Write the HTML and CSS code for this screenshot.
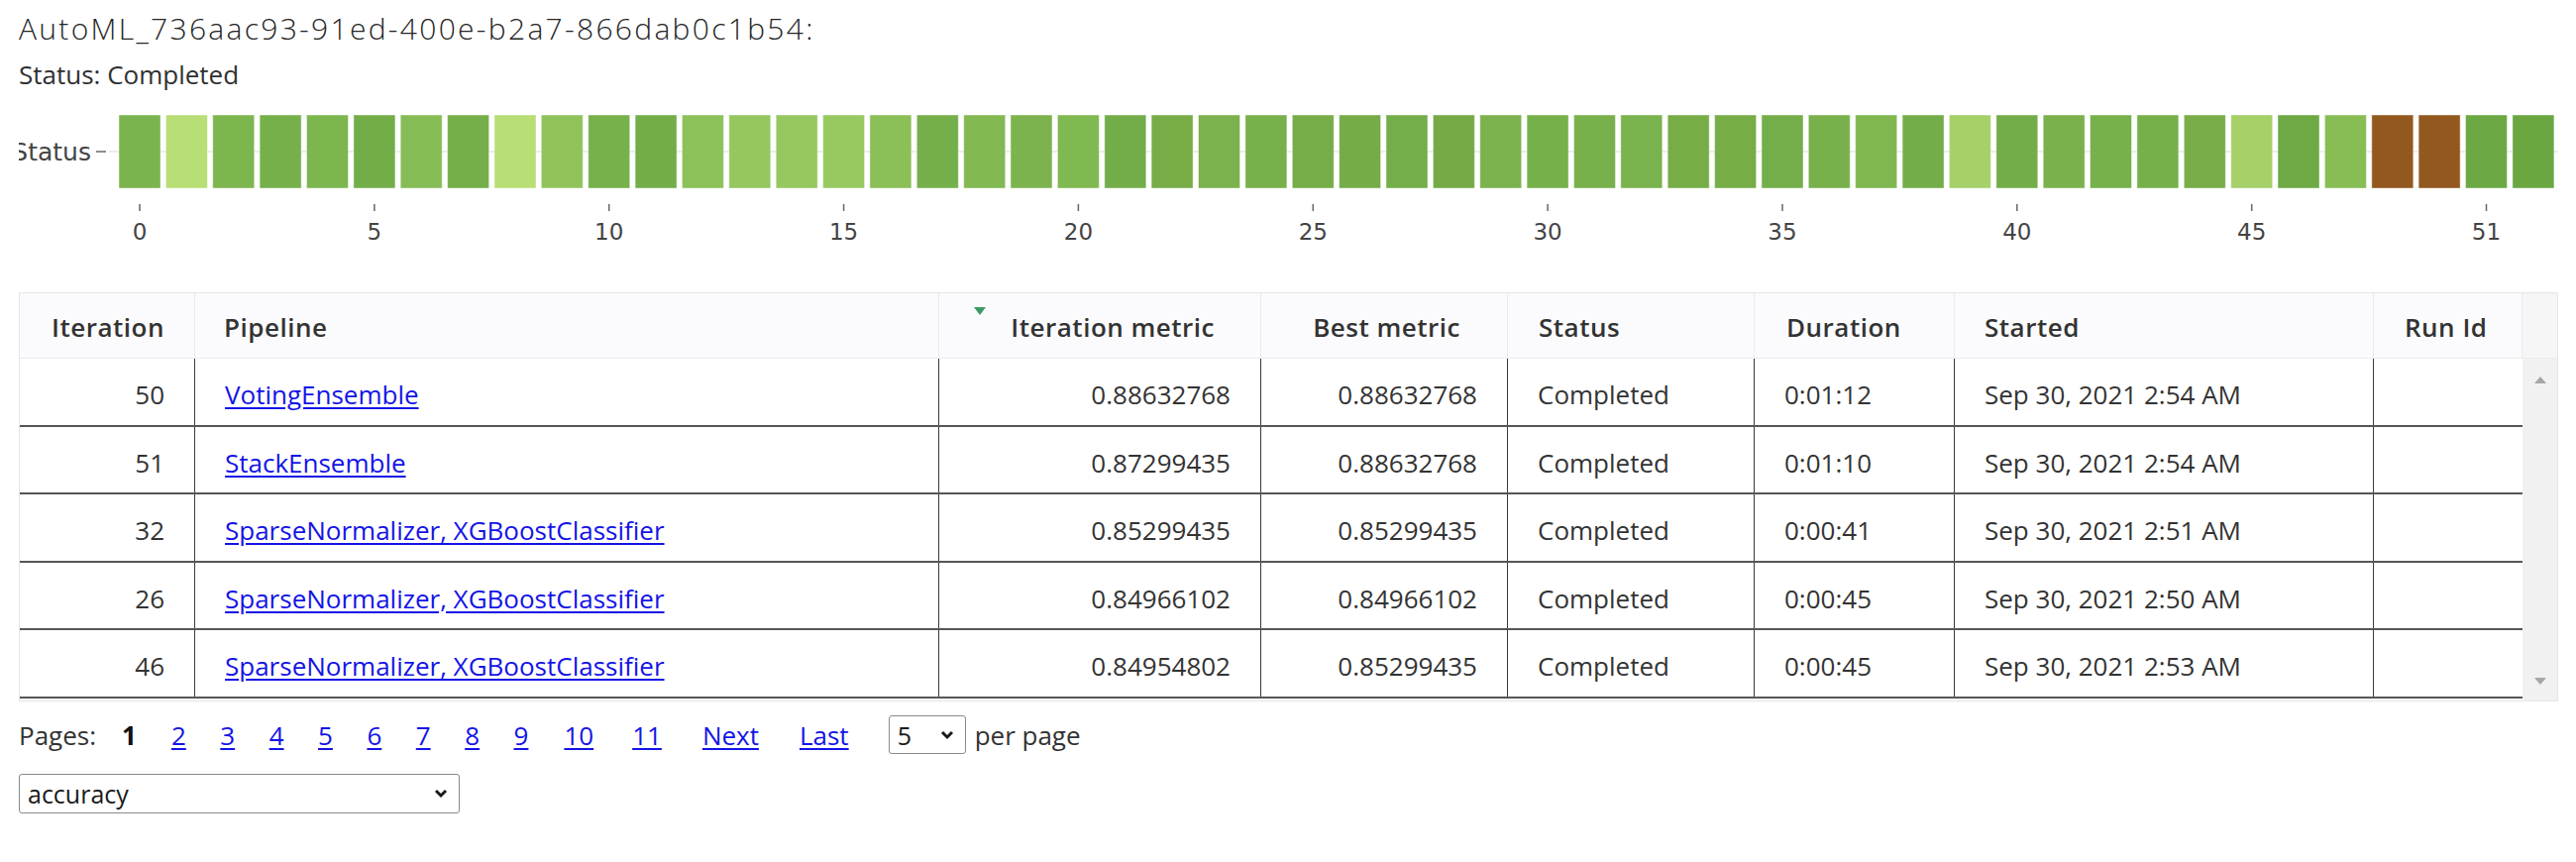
FILE: index.html
```html
<!DOCTYPE html>
<html>
<head>
<meta charset="utf-8">
<link rel="stylesheet" href="styles.css">
</head>
<body>
<div class="head">
  <div class="title">AutoML_736aac93-91ed-400e-b2a7-866dab0c1b54:</div>
  <div class="status">Status: Completed</div>
</div>

<svg class="chart" width="2600" height="203" viewBox="0 92 2600 203" xmlns="http://www.w3.org/2000/svg">
  <defs><clipPath id="plotclip"><rect x="19" y="92" width="2581" height="203"/></clipPath></defs>
  <g clip-path="url(#plotclip)">
    <line x1="110" y1="153" x2="2582" y2="153" stroke="#ececec" stroke-width="2"/>
    <g class="bars" stroke="rgba(255,255,255,0.45)" stroke-width="1">
      <rect x="120.0" y="116" width="42" height="74" fill="#7bb44e"/>
      <rect x="167.4" y="116" width="42" height="74" fill="#b8de76"/>
      <rect x="214.7" y="116" width="42" height="74" fill="#7db64f"/>
      <rect x="262.1" y="116" width="42" height="74" fill="#76b04a"/>
      <rect x="309.5" y="116" width="42" height="74" fill="#7cb64f"/>
      <rect x="356.9" y="116" width="42" height="74" fill="#72ad48"/>
      <rect x="404.2" y="116" width="42" height="74" fill="#86bc55"/>
      <rect x="451.6" y="116" width="42" height="74" fill="#74af49"/>
      <rect x="499.0" y="116" width="42" height="74" fill="#b8de76"/>
      <rect x="546.3" y="116" width="42" height="74" fill="#90c45b"/>
      <rect x="593.7" y="116" width="42" height="74" fill="#76b14b"/>
      <rect x="641.1" y="116" width="42" height="74" fill="#72ad48"/>
      <rect x="688.4" y="116" width="42" height="74" fill="#8dc159"/>
      <rect x="735.8" y="116" width="42" height="74" fill="#95c75e"/>
      <rect x="783.2" y="116" width="42" height="74" fill="#97c85f"/>
      <rect x="830.6" y="116" width="42" height="74" fill="#98c960"/>
      <rect x="877.9" y="116" width="42" height="74" fill="#8bbf57"/>
      <rect x="925.3" y="116" width="42" height="74" fill="#75af4a"/>
      <rect x="972.7" y="116" width="42" height="74" fill="#82b952"/>
      <rect x="1020.0" y="116" width="42" height="74" fill="#7cb34e"/>
      <rect x="1067.4" y="116" width="42" height="74" fill="#80b851"/>
      <rect x="1114.8" y="116" width="42" height="74" fill="#73ad49"/>
      <rect x="1162.1" y="116" width="42" height="74" fill="#77ac47"/>
      <rect x="1209.5" y="116" width="42" height="74" fill="#7cb24e"/>
      <rect x="1256.9" y="116" width="42" height="74" fill="#78b14c"/>
      <rect x="1304.3" y="116" width="42" height="74" fill="#76ad48"/>
      <rect x="1351.6" y="116" width="42" height="74" fill="#75ac48"/>
      <rect x="1399.0" y="116" width="42" height="74" fill="#74ae4a"/>
      <rect x="1446.4" y="116" width="42" height="74" fill="#75aa46"/>
      <rect x="1493.7" y="116" width="42" height="74" fill="#7cb24e"/>
      <rect x="1541.1" y="116" width="42" height="74" fill="#76b04b"/>
      <rect x="1588.5" y="116" width="42" height="74" fill="#78b14c"/>
      <rect x="1635.8" y="116" width="42" height="74" fill="#7ab34d"/>
      <rect x="1683.2" y="116" width="42" height="74" fill="#76ad47"/>
      <rect x="1730.6" y="116" width="42" height="74" fill="#76ad47"/>
      <rect x="1778.0" y="116" width="42" height="74" fill="#74ae4a"/>
      <rect x="1825.3" y="116" width="42" height="74" fill="#78b14c"/>
      <rect x="1872.7" y="116" width="42" height="74" fill="#80b750"/>
      <rect x="1920.1" y="116" width="42" height="74" fill="#73ad49"/>
      <rect x="1967.4" y="116" width="42" height="74" fill="#a6d068"/>
      <rect x="2014.8" y="116" width="42" height="74" fill="#73ad49"/>
      <rect x="2062.2" y="116" width="42" height="74" fill="#7bb14c"/>
      <rect x="2109.5" y="116" width="42" height="74" fill="#77b14c"/>
      <rect x="2156.9" y="116" width="42" height="74" fill="#76b04b"/>
      <rect x="2204.3" y="116" width="42" height="74" fill="#78ad49"/>
      <rect x="2251.7" y="116" width="42" height="74" fill="#a6d068"/>
      <rect x="2299.0" y="116" width="42" height="74" fill="#6ea946"/>
      <rect x="2346.4" y="116" width="42" height="74" fill="#88bd55"/>
      <rect x="2393.8" y="116" width="42" height="74" fill="#93581f"/>
      <rect x="2441.1" y="116" width="42" height="74" fill="#93581f"/>
      <rect x="2488.5" y="116" width="42" height="74" fill="#6ca944"/>
      <rect x="2535.9" y="116" width="42" height="74" fill="#6aa741"/>
    </g>
    <text class="ylabel" x="92" y="162" text-anchor="end">Status</text>
    <line x1="97" y1="153" x2="107" y2="153" stroke="#666" stroke-width="1.5"/>
    <g class="xticks" stroke="#666" stroke-width="1.5">
      <line x1="141" y1="206" x2="141" y2="213"/>
      <line x1="377.9" y1="206" x2="377.9" y2="213"/>
      <line x1="614.7" y1="206" x2="614.7" y2="213"/>
      <line x1="851.6" y1="206" x2="851.6" y2="213"/>
      <line x1="1088.4" y1="206" x2="1088.4" y2="213"/>
      <line x1="1325.3" y1="206" x2="1325.3" y2="213"/>
      <line x1="1562.1" y1="206" x2="1562.1" y2="213"/>
      <line x1="1799" y1="206" x2="1799" y2="213"/>
      <line x1="2035.8" y1="206" x2="2035.8" y2="213"/>
      <line x1="2272.7" y1="206" x2="2272.7" y2="213"/>
      <line x1="2509.5" y1="206" x2="2509.5" y2="213"/>
    </g>
    <g class="xlabels" text-anchor="middle">
      <text x="141" y="242">0</text>
      <text x="377.9" y="242">5</text>
      <text x="614.7" y="242">10</text>
      <text x="851.6" y="242">15</text>
      <text x="1088.4" y="242">20</text>
      <text x="1325.3" y="242">25</text>
      <text x="1562.1" y="242">30</text>
      <text x="1799" y="242">35</text>
      <text x="2035.8" y="242">40</text>
      <text x="2272.7" y="242">45</text>
      <text x="2509.5" y="242">51</text>
    </g>
  </g>
</svg>

<div class="grid-wrap">
  <div class="thead">
    <div class="th r pr-iter">Iteration</div>
    <div class="th pl-29">Pipeline</div>
    <div class="th r pr-47 sorted"><span class="sort-arrow"></span>Iteration metric</div>
    <div class="th r pr-48">Best metric</div>
    <div class="th pl-31">Status</div>
    <div class="th pl-32">Duration</div>
    <div class="th pl-30">Started</div>
    <div class="th pl-31">Run Id</div>
    <div class="th corner"></div>
  </div>
  <div class="tbody">
    <div class="rows">
      <div class="row">
        <div class="cell num">50</div>
        <div class="cell"><a href="#">VotingEnsemble</a></div>
        <div class="cell num">0.88632768</div>
        <div class="cell num">0.88632768</div>
        <div class="cell">Completed</div>
        <div class="cell">0:01:12</div>
        <div class="cell">Sep 30, 2021 2:54 AM</div>
        <div class="cell"></div>
      </div>
      <div class="row">
        <div class="cell num">51</div>
        <div class="cell"><a href="#">StackEnsemble</a></div>
        <div class="cell num">0.87299435</div>
        <div class="cell num">0.88632768</div>
        <div class="cell">Completed</div>
        <div class="cell">0:01:10</div>
        <div class="cell">Sep 30, 2021 2:54 AM</div>
        <div class="cell"></div>
      </div>
      <div class="row">
        <div class="cell num">32</div>
        <div class="cell"><a href="#">SparseNormalizer, XGBoostClassifier</a></div>
        <div class="cell num">0.85299435</div>
        <div class="cell num">0.85299435</div>
        <div class="cell">Completed</div>
        <div class="cell">0:00:41</div>
        <div class="cell">Sep 30, 2021 2:51 AM</div>
        <div class="cell"></div>
      </div>
      <div class="row">
        <div class="cell num">26</div>
        <div class="cell"><a href="#">SparseNormalizer, XGBoostClassifier</a></div>
        <div class="cell num">0.84966102</div>
        <div class="cell num">0.84966102</div>
        <div class="cell">Completed</div>
        <div class="cell">0:00:45</div>
        <div class="cell">Sep 30, 2021 2:50 AM</div>
        <div class="cell"></div>
      </div>
      <div class="row">
        <div class="cell num">46</div>
        <div class="cell"><a href="#">SparseNormalizer, XGBoostClassifier</a></div>
        <div class="cell num">0.84954802</div>
        <div class="cell num">0.85299435</div>
        <div class="cell">Completed</div>
        <div class="cell">0:00:45</div>
        <div class="cell">Sep 30, 2021 2:53 AM</div>
        <div class="cell"></div>
      </div>
    </div>
    <div class="vscroll">
      <span class="arrow-up"></span>
      <span class="arrow-down"></span>
    </div>
  </div>
</div>

<div class="pager">
  <span class="pages-label">Pages:</span>
  <span class="page current">1</span>
  <a href="#" class="page first-link">2</a>
  <a href="#" class="page">3</a>
  <a href="#" class="page">4</a>
  <a href="#" class="page">5</a>
  <a href="#" class="page">6</a>
  <a href="#" class="page">7</a>
  <a href="#" class="page">8</a>
  <a href="#" class="page">9</a>
  <a href="#" class="page ten">10</a>
  <a href="#" class="page eleven">11</a>
  <a href="#" class="page nav">Next</a>
  <a href="#" class="page nav">Last</a>
  <span class="sel-wrap small">
    <select class="sel"><option>5</option></select>
    <svg class="chev" width="14" height="10" viewBox="0 0 14 10"><path d="M2 2 L7 7 L12 2" fill="none" stroke="#1a1a1a" stroke-width="3"/></svg>
  </span>
  <span class="per-page">per page</span>
</div>

<div class="metric-row">
  <span class="sel-wrap wide">
    <select class="sel"><option>accuracy</option></select>
    <svg class="chev" width="14" height="10" viewBox="0 0 14 10"><path d="M2 2 L7 7 L12 2" fill="none" stroke="#1a1a1a" stroke-width="3"/></svg>
  </span>
</div>
</body>
</html>
```

FILE: styles.css
```css
* { box-sizing: border-box; }

body {
  margin: 0;
  background: #ffffff;
  color: #333333;
  font-family: "Open Sans", "Noto Sans", "DejaVu Sans", sans-serif;
}

.head {
  padding-left: 19px;
}

.title {
  margin-top: 9px;
  font-size: 30px;
  line-height: 40px;
  font-weight: 300;
  letter-spacing: 2.3px;
  color: #262626;
  white-space: nowrap;
}

.status {
  margin-top: 9px;
  font-size: 26px;
  line-height: 34px;
  color: #303030;
}

.chart {
  display: block;
}

.chart text {
  font-family: "DejaVu Sans", Verdana, sans-serif;
  fill: #444444;
}

.chart .ylabel {
  font-size: 25px;
}

.chart .xlabels text {
  font-size: 23px;
}

/* ---------- table ---------- */
.grid-wrap {
  margin-left: 19px;
  width: 2563px;
  border: 1px solid #e6e6e9;
}

.thead {
  display: grid;
  grid-template-columns: 177px 751px 325px 249px 249px 202px 423px 150px 35px;
  height: 66px;
  background: #fbfbfd;
  border-bottom: 1px solid #ececf0;
}

.th {
  display: flex;
  align-items: center;
  padding-top: 3px;
  font-size: 26px;
  font-weight: 600;
  letter-spacing: 0.5px;
  color: #333333;
  border-right: 1px solid #ebebef;
  white-space: nowrap;
  position: relative;
}

.th.r { justify-content: flex-end; }
.th.corner { background: #f6f6f7; border-right: none; }
.pr-iter { padding-right: 30px; }
.pr-47 { padding-right: 46px; }
.pr-48 { padding-right: 47px; }
.pl-29 { padding-left: 29px; }
.pl-30 { padding-left: 30px; }
.pl-31 { padding-left: 31px; }
.pl-32 { padding-left: 32px; }

.sort-arrow {
  position: absolute;
  left: 35px;
  top: 14px;
  width: 0;
  height: 0;
  border-left: 6px solid transparent;
  border-right: 6px solid transparent;
  border-top: 8px solid #3c9a62;
}

.tbody {
  display: flex;
}

.rows {
  width: 2526px;
  padding-bottom: 2px;
}

.row {
  display: grid;
  grid-template-columns: 177px 751px 325px 249px 249px 202px 423px 150px;
  height: 68px;
  border-bottom: 2px solid #565656;
}

.row:nth-child(odd) { height: 69px; }

.cell {
  display: flex;
  align-items: center;
  padding: 5px 30px 0 30px;
  font-size: 26px;
  color: #333333;
  border-right: 1px solid #3a3a3a;
  white-space: nowrap;
  overflow: hidden;
}

.cell:last-child { border-right: none; }
.cell.num { justify-content: flex-end; }

.cell a {
  color: #1414e6;
  text-decoration: underline;
  text-underline-offset: 3px;
}

.vscroll {
  width: 35px;
  background: #f1f1f1;
  display: flex;
  flex-direction: column;
  justify-content: space-between;
  align-items: center;
  padding: 18px 0 16px;
}

.arrow-up {
  width: 0;
  height: 0;
  border-left: 6px solid transparent;
  border-right: 6px solid transparent;
  border-bottom: 7px solid #a6a6a6;
}

.arrow-down {
  width: 0;
  height: 0;
  border-left: 6px solid transparent;
  border-right: 6px solid transparent;
  border-top: 7px solid #a6a6a6;
}

/* ---------- pager ---------- */
.pager {
  display: flex;
  align-items: center;
  height: 39px;
  margin: 14px 0 0 19px;
  font-size: 26px;
  color: #333333;
  white-space: nowrap;
}

.pager a {
  color: #1414e6;
  text-decoration: underline;
  text-underline-offset: 3px;
}

.page { margin-left: 34.5px; }
.page.current { margin-left: 26px; font-weight: 700; color: #111111; }
.page.first-link { margin-left: 35px; }
.page.ten { margin-left: 36px; }
.page.eleven { margin-left: 39px; }
.page.nav { margin-left: 41px; }

.sel-wrap {
  position: relative;
  display: inline-block;
}

.sel-wrap.small {
  margin-left: 40px;
  width: 78px;
  height: 39px;
}

.sel-wrap.wide {
  width: 445px;
  height: 40px;
}

.sel {
  -webkit-appearance: none;
  appearance: none;
  width: 100%;
  height: 100%;
  margin: 0;
  padding: 0 0 0 8px;
  border: 1px solid #8a8a8a;
  border-radius: 3px;
  background: #ffffff;
  color: #1a1a1a;
  font-family: "Open Sans", "Noto Sans", sans-serif;
  font-size: 25px;
}

.chev {
  position: absolute;
  top: 15px;
  right: 12px;
  pointer-events: none;
}

.per-page {
  margin-left: 9px;
}

.metric-row {
  margin: 20px 0 0 19px;
}
```
